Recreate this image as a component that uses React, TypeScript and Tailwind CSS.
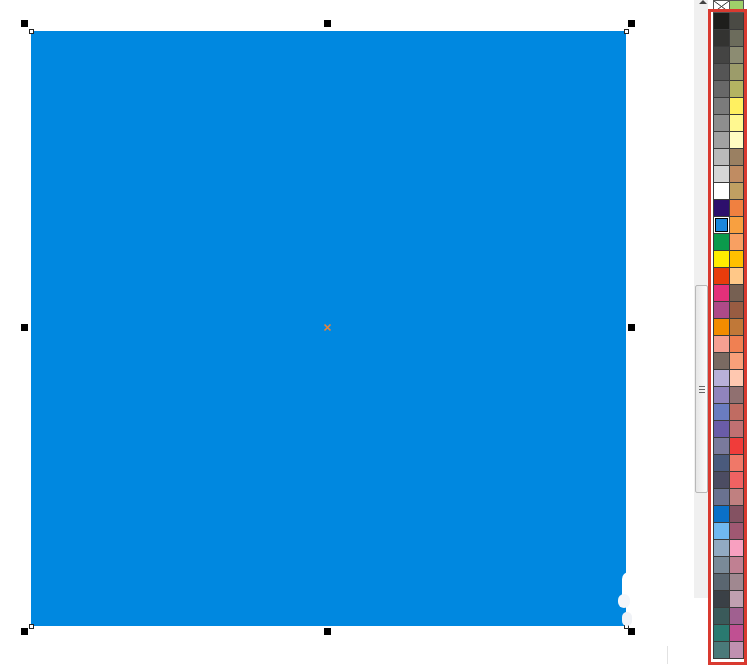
import React from "react";

const left = [
  "#1e1e1c", "#333331", "#444443", "#555555", "#686868", "#7b7b7b", "#8e8e8e", "#a2a2a2", "#bababa", "#d6d6d6",
  "#ffffff", "#2d0f6c", "#1a86dc", "#0b9a4c", "#ffec00", "#e83c0c", "#e4307a", "#ae4a88", "#f28c00", "#f5a092",
  "#7a6a62", "#b8b0d8", "#9084bc", "#6a7cc0", "#6a5ca8", "#7a7a9c", "#4a5a7c", "#4c4c62", "#6a7290", "#0a70c8",
  "#70b8f0", "#92aac2", "#7a8a98", "#5a6670", "#3a4046", "#3a5a5a", "#2a7a70", "#4a7a7a",
];

const right = [
  "#4a4a44", "#6c6c5c", "#8c8c72", "#9c9c6a", "#b4b462", "#fff060", "#fff890", "#fffcc2", "#9a8062", "#c08c62",
  "#c0a062", "#f08040", "#f8a040", "#f8a062", "#ffc000", "#ffc888", "#766052", "#985c42", "#c07838", "#f08052",
  "#f8a07a", "#ffc8b0", "#907070", "#c06c62", "#c07072", "#f03c3a", "#f07868", "#f06262", "#c08080", "#845262",
  "#a05872", "#f8a0c0", "#c08092", "#a08890", "#c0a0b0", "#a06090", "#c05092", "#c090b0",
];

const handles: [number, number][] = [
  [24, 23], [327, 23], [631, 23],
  [24, 327], [631, 327],
  [24, 631], [327, 631], [631, 631],
];

const nodes: [number, number][] = [[31, 31], [626, 31], [31, 626], [626, 626]];

function Canvas() {
  return (
    <div className="relative w-[694px] h-[667px] bg-white shrink-0">
      <div className="absolute left-[31px] top-[31px] w-[595px] h-[595px] bg-[#0088e0]" />
      {handles.map(([x, y]) => (
        <div
          key={`${x}-${y}`}
          className="absolute w-[7px] h-[7px] bg-black"
          style={{ left: x - 3, top: y - 3 }}
        />
      ))}
      {nodes.map(([x, y]) => (
        <div
          key={`n${x}-${y}`}
          className="absolute w-[5px] h-[5px] bg-white border border-[#222]"
          style={{ left: x - 2, top: y - 2 }}
        />
      ))}
      <svg className="absolute left-[323px] top-[323px]" width="9" height="9" viewBox="0 0 9 9">
        <path d="M1.5 1.5 L7.5 7.5 M7.5 1.5 L1.5 7.5" stroke="#e8843a" strokeWidth="1.6" />
      </svg>
      {/* white smudge on the lower right edge */}
      <div className="absolute left-[622px] top-[572px] w-[14px] h-[30px] rounded-full bg-white" />
      <div className="absolute left-[618px] top-[594px] w-[12px] h-[14px] rounded-full bg-[#f4f6fa]" />
      <div className="absolute left-[622px] top-[612px] w-[10px] h-[14px] rounded-full bg-[#f0f2f6]" />
      <div className="absolute left-[667px] top-[646px] w-px h-[18px] bg-[#e2e2e2]" />
    </div>
  );
}

function Scrollbar() {
  return (
    <div className="relative w-[14px] h-[667px] shrink-0 bg-white">
      <div className="h-[598px] bg-[#f0f0f0] flex flex-col">
        <div className="h-[285px]" />
        <div className="w-[13px] ml-px h-[208px] rounded-[2px] border border-[#b8b8b8] bg-gradient-to-r from-[#e6e6e6] to-[#fbfbfb] flex flex-col items-center justify-center gap-[2px]">
          <div className="w-[6px] h-px bg-[#666]" />
          <div className="w-[6px] h-px bg-[#666]" />
          <div className="w-[6px] h-px bg-[#666]" />
        </div>
      </div>
      <svg className="absolute left-[5px] top-0" width="8" height="4" viewBox="0 0 8 4">
        <path d="M0 4 L4 0 L8 4 Z" fill="#444" />
      </svg>
    </div>
  );
}

function Palette() {
  return (
    <div className="relative w-[40px] h-[667px] shrink-0 bg-white pl-[5px] overflow-hidden">
      <div className="flex h-[13px]">
        <div className="w-[17px] h-[13px] bg-white border border-[#555] relative">
          <svg className="absolute inset-0" width="15" height="11" viewBox="0 0 15 11">
            <path d="M0 0 L15 11 M15 0 L0 11" stroke="#333" strokeWidth="1" />
          </svg>
        </div>
        <div className="w-[14px] h-[13px] bg-[#9fd06a] border-y border-r border-[#555]" />
      </div>
      {left.map((c, i) => (
        <div key={i} className="flex h-[17px]">
          <div className="w-[17px] h-[17px] border-b border-x border-[#3a3a3a] relative" style={{ backgroundColor: c }}>
            {i === 12 && (
              <div className="absolute inset-0 border border-white">
                <div className="w-full h-full border border-black" />
              </div>
            )}
          </div>
          <div className="w-[14px] h-[17px] border-b border-r border-[#3a3a3a]" style={{ backgroundColor: right[i] }} />
        </div>
      ))}
      <div className="absolute left-0 top-[9px] w-[39px] h-[656px] border-[3px] border-[#d93a30]" />
    </div>
  );
}

export default function App() {
  return (
    <div className="flex w-[748px] h-[667px] overflow-hidden bg-white">
      <Canvas />
      <Scrollbar />
      <Palette />
    </div>
  );
}
